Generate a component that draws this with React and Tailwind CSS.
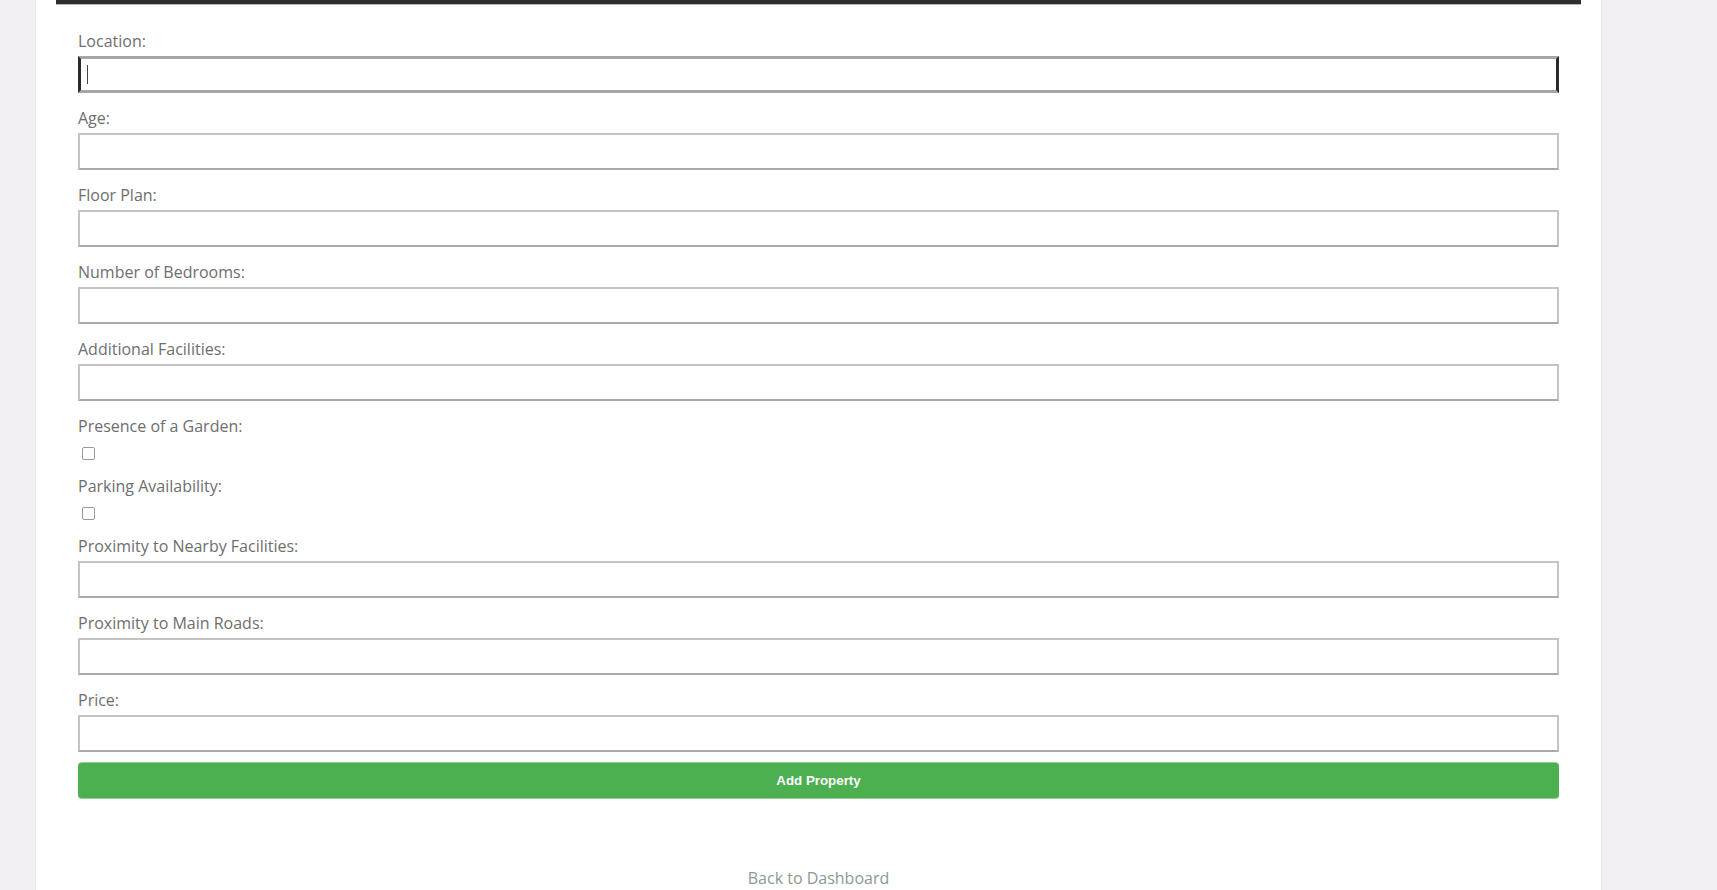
import React from "react";

const font = { fontFamily: '"Open Sans", "Noto Sans", sans-serif' };

function Label({ children, className = "" }) {
  return (
    <label className={"block text-[16px] leading-[20px] text-[#6e6e6e] " + className}>
      {children}
    </label>
  );
}

function TextField({ label }) {
  return (
    <div className="flex flex-col">
      <Label className="mb-[5px]">{label}</Label>
      <input
        type="text"
        className="block w-full h-[37px] bg-white border-2 border-[#c4c4c4] border-b-[#a9a9a9] px-[6px] outline-none"
      />
    </div>
  );
}

function CheckField({ label }) {
  return (
    <div className="flex flex-col">
      <Label>{label}</Label>
      <input
        type="checkbox"
        className="appearance-none block ml-[4px] mt-[11px] w-[13px] h-[13px] rounded-[2px] border border-[#9a9a9a] bg-white"
      />
    </div>
  );
}

export default function App() {
  return (
    <div className="w-full h-[890px] overflow-hidden bg-[#f2f0f3]" style={font}>
      <div className="ml-[35px] w-[1567px] h-[890px] bg-white border-x border-[#e6e4e8] px-[20px]">
        <div className="h-[5px] bg-[#2e2e2e] border-b border-[#b5b5b5]" />
        <form className="px-[22px] pt-[26px] flex flex-col">
          <div className="flex flex-col">
            <Label className="mb-[5px]">Location:</Label>
            <div className="relative">
              <input
                type="text"
                className="block w-full h-[37px] bg-white border-y-[3px] border-y-[#a6a6a6] border-x-[3px] border-x-[#2a2a2a] px-[6px] outline-none"
              />
              <span className="absolute left-[9px] top-[9px] w-[1px] h-[19px] bg-[#444]" />
            </div>
          </div>
          <div className="mt-[15px]"><TextField label="Age:" /></div>
          <div className="mt-[15px]"><TextField label="Floor Plan:" /></div>
          <div className="mt-[15px]"><TextField label="Number of Bedrooms:" /></div>
          <div className="mt-[15px]"><TextField label="Additional Facilities:" /></div>
          <div className="mt-[15px]"><CheckField label="Presence of a Garden:" /></div>
          <div className="mt-[16px]"><CheckField label="Parking Availability:" /></div>
          <div className="mt-[16px]"><TextField label="Proximity to Nearby Facilities:" /></div>
          <div className="mt-[15px]"><TextField label="Proximity to Main Roads:" /></div>
          <div className="mt-[15px]"><TextField label="Price:" /></div>
          <button
            type="button"
            className="mt-[10px] w-full h-[37px] rounded-[4px] bg-[#4caf50] border-y border-[#8fd48f] text-white font-bold text-[13.33px]"
            style={{ fontFamily: '"Liberation Sans", Arial, sans-serif' }}
          >
            Add Property
          </button>
          <div className="mt-[67px] text-center">
            <a href="#" className="text-[16px] leading-[24px] text-[#8a9a92]">
              Back to Dashboard
            </a>
          </div>
        </form>
      </div>
    </div>
  );
}
